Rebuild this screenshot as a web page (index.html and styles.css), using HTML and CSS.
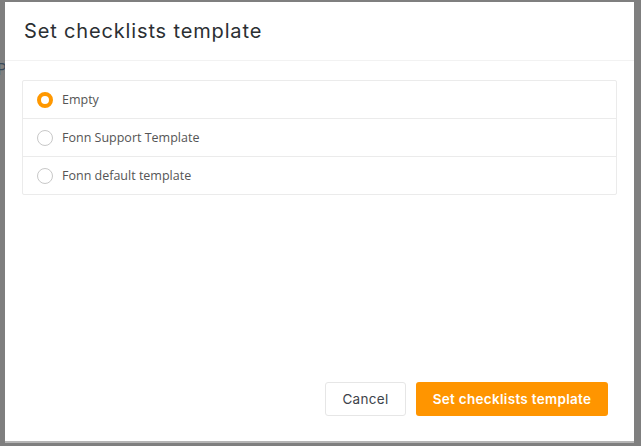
FILE: index.html
```html
<!DOCTYPE html>
<html>
<head>
<meta charset="utf-8">
<link rel="stylesheet" href="styles.css">
</head>
<body>
<div class="backdrop-text">P</div>
<div class="dialog">
  <div class="header">
    <h1 class="title">Set checklists template</h1>
  </div>
  <div class="body">
    <div class="list">
      <label class="row">
        <span class="radio checked"></span>
        <span class="label">Empty</span>
      </label>
      <label class="row">
        <span class="radio"></span>
        <span class="label">Fonn Support Template</span>
      </label>
      <label class="row">
        <span class="radio"></span>
        <span class="label">Fonn default template</span>
      </label>
    </div>
  </div>
  <div class="footer">
    <button class="btn btn-cancel">Cancel</button>
    <button class="btn btn-primary">Set checklists template</button>
  </div>
</div>
</body>
</html>
```

FILE: styles.css
```css
html, body {
  margin: 0;
  padding: 0;
}
body {
  background: #7f7f7f;
  width: 641px;
  height: 446px;
  overflow: hidden;
  position: relative;
  font-family: "Open Sans", "Liberation Sans", sans-serif;
}
.backdrop-text {
  position: absolute;
  left: -3px;
  top: 58px;
  font-size: 16px;
  color: #3a4a5a;
}
.dialog {
  position: relative;
  margin: 2px 0 0 5px;
  width: 629px;
  height: 439px;
  background: #fff;
  box-shadow: 0 2px 0 #b5b5b5;
  display: flex;
  flex-direction: column;
}
.header {
  height: 58px;
  border-bottom: 1px solid #f2f2f2;
  padding-left: 19px;
  display: flex;
  align-items: center;
}
.title {
  margin: 0;
  font-family: Inter, "Open Sans", sans-serif;
  font-weight: 400;
  font-size: 20px;
  color: #2b2f33;
  letter-spacing: 0.85px;
}
.body {
  flex: 1;
  padding: 19px 17px 0 17px;
}
.list {
  border: 1px solid #ebebeb;
  border-radius: 2px;
}
.row {
  height: 37px;
  display: flex;
  align-items: center;
  padding-left: 14px;
  border-top: 1px solid #ebebeb;
}
.row:first-child {
  border-top: none;
  height: 37px;
}
.radio {
  width: 16px;
  height: 16px;
  box-sizing: border-box;
  border: 1px solid #c8c8c8;
  border-radius: 50%;
  margin-right: 9px;
  background: #fff;
}
.radio.checked {
  border: 4.5px solid #ff9800;
}
.label {
  font-size: 12.5px;
  color: #555;
}
.footer {
  display: flex;
  justify-content: flex-end;
  gap: 10px;
  padding: 0 26px 25px 0;
}
.btn {
  height: 34px;
  border-radius: 3px;
  font-family: Inter, "Open Sans", sans-serif;
  font-size: 13.5px;
  letter-spacing: 0.3px;
  cursor: pointer;
}
.btn-cancel {
  width: 81px;
  background: #fff;
  border: 1px solid #e6e6e6;
  color: #3d434a;
}
.btn-primary {
  width: 192px;
  background: #ff9500;
  border: none;
  color: #fff;
  font-weight: 600;
}
```
